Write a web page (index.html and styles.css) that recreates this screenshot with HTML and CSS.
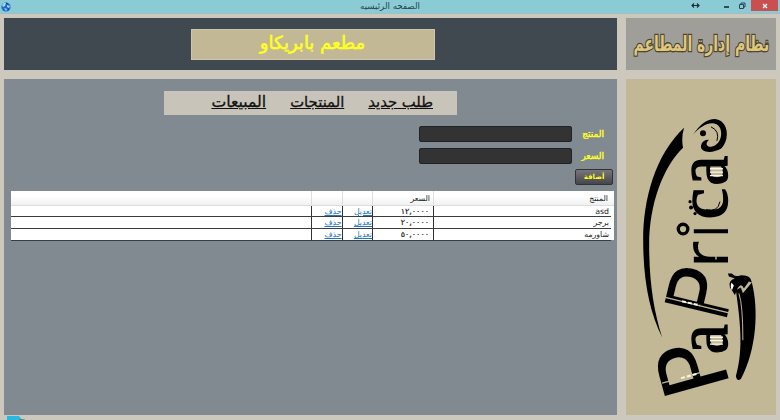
FILE: index.html
```html
<!DOCTYPE html>
<html lang="ar" dir="rtl">
<head>
<meta charset="utf-8">
<title>الصفحه الرئيسيه</title>
<link rel="stylesheet" href="styles.css">
</head>
<body>
<div class="titlebar" dir="ltr">
  <svg class="globe" viewBox="0 0 10 10"><circle cx="5" cy="5" r="4.6" fill="#2468c8"/><path d="M1 3Q3 0 5 1L4 4 2 5ZM6 3 9 4 8 6 6 5ZM3 6 6 7 5 9Z" fill="#a3d5f5"/><path d="M5 1 7 2M7 7 8 7" stroke="#123c9a"/></svg>
  <span class="caption" dir="rtl">الصفحه الرئيسيه</span>
  <div class="controls">
    <svg class="glyphs" viewBox="0 0 60 12"><path d="M2 5.5H9M4 3.5 2 5.5 4 7.5M7 3.5 9 5.5 7 7.5" fill="none" stroke="#152d35" stroke-width="1.1"/><path d="M34 7H39" stroke="#152d35" stroke-width="1.6"/><path d="M49.5 4.5H53.5V8.5H49.5ZM51 4V3H55V7H54" fill="none" stroke="#26464e"/></svg>
    <div class="close"><svg viewBox="0 0 6 6"><path d="M1 1 5 5M5 1 1 5" stroke="#fff" stroke-width="1.3"/></svg></div>
  </div>
</div>
<div class="layout">
  <div class="brand"><span>نظام إدارة المطاعم</span></div>
  <header class="header"><h1>مطعم بابريكاو</h1></header>
  <aside class="side">
    <svg viewBox="626 79 150 337">
      <path d="M684 128C655 155 643 200 643 240C643 280 649 312 662 338C653 310 649 280 649 245C649 205 663 167 683 148Q681 138 684 128Z"/>
      <g class="sans">
        <text transform="translate(731 388) rotate(-105.5) scale(1.02 1)" font-size="91">P</text>
        <text transform="translate(725 326) rotate(-76.500) scale(.95 1)" font-size="88">P</text>
        <text transform="translate(728 269) rotate(-90) scale(1.05 1)" font-size="62">r</text>
        <text transform="translate(728 239) rotate(-90) scale(.9 1)" font-size="62">ı</text>
      </g>
      <g class="serif">
        <text transform="translate(727 355) rotate(-90) scale(.92 1)" font-size="74">a</text>
        <text transform="translate(727 186) rotate(-90) scale(.92 1)" font-size="74">a</text>
        <text transform="translate(727 220) rotate(-90) scale(.98 1)" font-size="73">c</text>
      </g>
      <g fill="none" stroke="#c2b895" stroke-width="1.400">
        <path d="M662 384 727 366M661 297 729 313.500M693 229H728M716 240V260"/>
      </g>
      <g fill="none" stroke="#f8f6e8" stroke-width="2">
        <path d="M681 379 698 374.500M682 302 700 306" stroke-dasharray="4 2"/>
        <path d="M710 338H723M710 341.500H723M710 345H723M710 169H723M710 172.500H723M710 176H723" stroke-width="1.300"/>
      </g>
      <circle cx="683" cy="229.500" r="4.800" fill="none" stroke="#000" stroke-width="3.300"/>
      <circle cx="690" cy="202" r="1.600"/><circle cx="691" cy="208" r="2"/><circle cx="695" cy="214" r="1.600"/>
      <path d="M693 135Q703 119 715 119C728 120 731 139 721 149C712 154 700 153 701 146Q702 140 709 140Q704 145 709 147C718 148 724 137 720 128C715 119 702 124 693 135Z"/>
      <circle cx="703" cy="133.500" r="3"/>
      <path d="M711 127Q720 131 717 141M706 210Q718 213 720 202" fill="none" stroke="#000"/>
      <path d="M736 291 741 288 743 294 752 283C759 310 757 350 741 380Q737 383 736 377C744 350 740 320 736 291Z"/>
      <path d="M732 291 735 296Q740 280 744 289L749 282 752 283Q751 275 740 276Q735 278 732 274L728 274 729 277 735 279Q728 281 730 288Z"/>
      <path d="M739 294Q743 305 743 341" fill="none" stroke="#c2b895"/>
      <path d="M731.500 283Q730 288 732 291L734 286Z" fill="#fff"/>
    </svg>
  </aside>
  <main class="main">
    <nav><a>طلب جديد</a><a>المنتجات</a><a class="wide">المبيعات</a></nav>
    <form>
      <div class="field"><label>المنتج</label><input></div>
      <div class="field"><label>السعر</label><input></div>
      <button type="button">أضافة</button>
    </form>
    <div class="table">
      <div class="row head"><span>المنتج</span><span>السعر</span><span></span><span></span><span></span></div>
      <div class="row"><span>asd</span><span class="num">١٢,٠٠٠٠</span><a>تعديل</a><a>حذف</a><span></span></div>
      <div class="row"><span>برجر</span><span class="num">٢٠,٠٠٠٠</span><a>تعديل</a><a>حذف</a><span></span></div>
      <div class="row"><span>شاورمه</span><span class="num">٥٠,٠٠٠٠</span><a>تعديل</a><a>حذف</a><span></span></div>
    </div>
  </main>
</div>
<svg class="corner" viewBox="0 0 20 4"><path d="M0 0H12L15 4H0Z" fill="#27b9df"/><path d="M12 2.500 18 3.500V4H13Z" fill="#4a9a78"/></svg>
</body>
</html>
```

FILE: styles.css
```css
* { box-sizing: border-box; }
body { margin: 0; width: 780px; height: 420px; overflow: hidden; background: #ccc8bd; font-family: "DejaVu Sans", sans-serif; position: relative; }
svg { display: block; overflow: visible; }
.titlebar { height: 14px; background: #8bcbd5; display: grid; grid-template-columns: 1fr auto 1fr; border-bottom: 1px solid #a2bfc0; }
.globe { width: 10px; height: 10px; margin: 2px 0 0 1px; }
.caption { font-size: 8.7px; line-height: 13px; color: #27444c; }
.controls { display: flex; justify-content: flex-end; gap: 1px; padding-right: 2px; }
.glyphs { width: 60px; height: 12px; }
.close { width: 27px; height: 11px; background: #c9504f; display: flex; align-items: center; justify-content: center; }
.close svg { width: 6px; height: 6px; }
.layout { display: grid; grid-template-columns: 150px 613px; grid-template-rows: 52px 336px; gap: 9px; padding: 4px 4px 0; }
.brand { background: #a09e98; display: flex; align-items: center; justify-content: center; }
.brand span { font-size: 15.5px; line-height: 28px; font-weight: bold; color: #dfc77c; -webkit-text-stroke: 2px #4c4633; paint-order: stroke; white-space: nowrap; transform: scale(0.9, 1.35); }
.header { background: #414950; display: flex; align-items: center; justify-content: center; }
h1 { margin: 0; position: relative; left: 2px; width: 244px; height: 31px; background: #c2b895; border: 1px solid #cbc6ad; color: #ff2; font-size: 18px; font-weight: normal; -webkit-text-stroke: 0.6px #ff2; line-height: 25px; text-align: center; }
.side { background: #c2b895; }
.side svg { width: 150px; height: 336px; }
.sans { font-family: "DejaVu Sans", sans-serif; direction: ltr; }
.serif { font-family: "Liberation Serif", serif; direction: ltr; stroke: #000; stroke-width: 1.4px; }
.main { background: #808a90; padding: 12px 3px 0 7px; }
nav { width: 293px; height: 24px; margin-right: 157px; background: #c8c4b9; padding: 0 24px; display: flex; gap: 24px; font-size: 14.8px; line-height: 22px; color: #111; -webkit-text-stroke: 0.3px #111; white-space: nowrap; }
nav a { text-decoration: underline; }
.wide { font-size: 15.7px; }
form { height: 70px; padding: 8.5px 0 0; margin-right: -2px; display: flex; flex-direction: column; align-items: flex-start; }
.field { display: flex; align-items: center; height: 21.5px; padding-right: 12px; }
label { width: 32px; color: #ff2; font-size: 9px; -webkit-text-stroke: 0.4px #ff2; line-height: 14px; }
input { width: 153px; height: 16px; padding: 0; border: 1px solid #1e2326; border-radius: 2px; background: #333; }
button { width: 38px; height: 16px; margin: 2px 3px 0 0; padding: 0; border: 1px solid #303236; border-radius: 2px; background: linear-gradient(#77777b, #46464a); color: #ff2; font: bold 7px/12px "DejaVu Sans", sans-serif; }
.table { margin-top: 6px; background: #fff; font-size: 7.8px; color: #222; height: 49px; }
.row { display: grid; grid-template-columns: 178px 61px 30.5px 30.5px 1fr; height: 11.7px; margin-right: 3px; border-bottom: 1px solid #393d40; line-height: 12px; }
.row > * { border-left: 1px solid #333; padding-right: 2px; overflow: hidden; white-space: nowrap; }
.row > :last-child { border-left: 0; }
.row a { color: #2876c0; text-decoration: underline; padding-right: 0; }
.row .num { font-size: 8px; letter-spacing: -1.9px; padding-right: 4px; -webkit-text-stroke: 0.2px #222; }
.head { height: 14.5px; margin-right: 0; padding-right: 3px; background: linear-gradient(#fff 35%, #f0f1f2); border-bottom-color: #ddd; line-height: 15px; }
.head > * { border-left-color: #ddd; padding-right: 3px; }
.corner { position: absolute; left: 7px; top: 416px; width: 20px; height: 4px; }
```
